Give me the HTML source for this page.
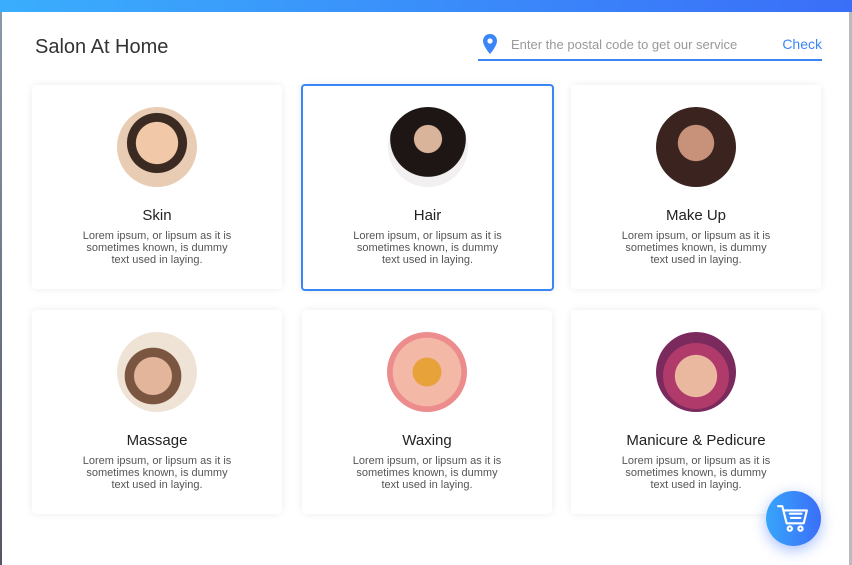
<!DOCTYPE html>
<html><head><meta charset="utf-8"><style>
*{margin:0;padding:0;box-sizing:border-box}
body{width:852px;height:565px;overflow:hidden;background:#fff;font-family:"Liberation Sans",sans-serif;position:relative}
.topbar{position:absolute;left:0;top:0;width:852px;height:12px;background:linear-gradient(90deg,#3aaefc,#3a6ef8)}
.lb{position:absolute;left:0;top:12px;width:2px;height:553px;background:linear-gradient(#8a9aa8,#556)}
.rb{position:absolute;right:0;top:12px;width:3px;height:553px;background:#bbb}
h1{position:absolute;left:35px;top:36px;font-size:20px;font-weight:normal;color:#333}
.search{position:absolute;left:478px;top:30px;width:344px;height:31px;border-bottom:2px solid #3b86f7}
.search .ph{position:absolute;left:33px;top:7px;font-size:13px;color:#999}
.search .ck{position:absolute;right:0;top:6px;font-size:14px;color:#3b86f7}
.card{position:absolute;width:250px;height:204px;background:#fff;border-radius:4px;box-shadow:0 0 8px rgba(0,0,0,.08);text-align:center}
.card.sel{border:2px solid #3b86f7;width:253px;height:207px}
.av{width:80px;height:80px;border-radius:50%;margin:22px auto 0}
.t{font-size:15px;color:#222;margin-top:20px}
.d{font-size:11px;color:#555;line-height:12px;margin:6px auto 0;width:160px}
.cart{position:absolute;left:766px;top:491px;width:55px;height:55px;border-radius:50%;background:linear-gradient(90deg,#38a5fb,#3a6ef8);box-shadow:0 4px 14px rgba(58,110,248,.45)}
</style></head><body>
<div class="topbar"></div><div class="lb"></div><div class="rb"></div>
<h1>Salon At Home</h1>
<div class="search">
<svg style="position:absolute;left:5px;top:4px" width="14" height="20" viewBox="0 0 14 20"><path d="M7 0C3 0 0 3 0 7c0 5 7 13 7 13s7-8 7-13c0-4-3-7-7-7z" fill="#3b86f7"/><circle cx="7" cy="7" r="2.6" fill="#fff"/></svg>
<span class="ph">Enter the postal code to get our service</span><span class="ck">Check</span></div>

<div class="card" style="left:32px;top:85px"><div class="av" style="background:radial-gradient(circle at 50% 45%,#f1c9a8 0 35%,#3a2a22 36% 50%,#e8cdb4 51%)"></div><div class="t">Skin</div><div class="d">Lorem ipsum, or lipsum as it is sometimes known, is dummy text used in laying.</div></div>
<div class="card sel" style="left:301px;top:84px"><div class="av" style="margin-top:21px;background:radial-gradient(circle at 50% 40%,#d9b39a 0 22%,#1e1614 23% 60%,#f2f0f0 61%)"></div><div class="t">Hair</div><div class="d">Lorem ipsum, or lipsum as it is sometimes known, is dummy text used in laying.</div></div>
<div class="card" style="left:571px;top:85px"><div class="av" style="background:radial-gradient(circle at 50% 45%,#c8917a 0 30%,#3b2420 31%)"></div><div class="t">Make Up</div><div class="d">Lorem ipsum, or lipsum as it is sometimes known, is dummy text used in laying.</div></div>

<div class="card" style="left:32px;top:310px"><div class="av" style="background:radial-gradient(circle at 45% 55%,#e3b59a 0 30%,#7a5540 31% 45%,#efe3d6 46%)"></div><div class="t">Massage</div><div class="d">Lorem ipsum, or lipsum as it is sometimes known, is dummy text used in laying.</div></div>
<div class="card" style="left:302px;top:310px"><div class="av" style="background:radial-gradient(circle at 50% 50%,#e8a23a 0 25%,#f4b8a6 26% 60%,#ec8c8c 61%)"></div><div class="t">Waxing</div><div class="d">Lorem ipsum, or lipsum as it is sometimes known, is dummy text used in laying.</div></div>
<div class="card" style="left:571px;top:310px"><div class="av" style="background:radial-gradient(circle at 50% 55%,#e9b89e 0 35%,#b03a6a 36% 55%,#7a2a5c 56%)"></div><div class="t">Manicure &amp; Pedicure</div><div class="d">Lorem ipsum, or lipsum as it is sometimes known, is dummy text used in laying.</div></div>

<div class="cart"><svg style="position:absolute;left:11px;top:13px" width="32" height="30" viewBox="0 0 30 28" fill="none" stroke="#fff" stroke-width="2" stroke-linecap="round" stroke-linejoin="round"><path d="M1 2h4l4 16h16l3-12H7"/><path d="M12 9h11M13 13h9"/><circle cx="12" cy="23" r="2"/><circle cx="22" cy="23" r="2"/></svg></div>
</body></html>
